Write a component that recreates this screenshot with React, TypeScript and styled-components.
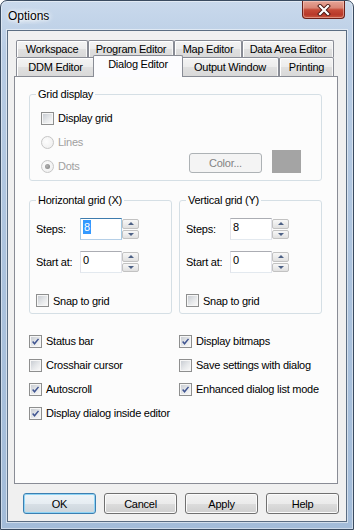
import React from "react";
import styled, { createGlobalStyle, css } from "styled-components";

const GlobalStyle = createGlobalStyle`
  html, body {
    margin: 0;
    padding: 0;
    background: #ffffff;
  }
  body {
    font-family: "Liberation Sans", Arial, sans-serif;
    font-size: 11px;
    letter-spacing: -0.25px;
    color: #000;
  }
  * {
    box-sizing: border-box;
  }
`;

const Window = styled.div`
  width: 354px;
  height: 530px;
  display: flex;
  flex-direction: column;
  border: 1px solid #3a4b60;
  border-radius: 7px 7px 0 0;
  padding: 0 6px 7px;
  background: linear-gradient(180deg, #c9d9ec 0%, #b8cce4 10%, #abc2dd 55%, #a3bcd9 100%);
  box-shadow: inset 0 0 0 1px rgba(255, 255, 255, 0.45);
  overflow: hidden;
`;

const TitleBar = styled.div`
  height: 29px;
  flex: none;
  display: flex;
  align-items: center;
  justify-content: space-between;
  padding: 0 2px 0 1px;
`;

const Title = styled.div`
  font-size: 12px;
  letter-spacing: 0;
  line-height: 15px;
  padding: 2px 6px 0 0;
  text-shadow: 0 0 6px #ffffff, 0 0 3px rgba(255, 255, 255, 0.9);
  background: radial-gradient(ellipse at 40% 55%, rgba(255, 255, 255, 0.5), rgba(255, 255, 255, 0) 70%);
`;

const CloseButton = styled.div`
  align-self: flex-start;
  width: 43px;
  height: 18px;
  display: flex;
  align-items: center;
  justify-content: center;
  border: 1px solid #6b2019;
  border-top: none;
  border-radius: 0 0 4px 4px;
  background: linear-gradient(180deg, #e6a597 0%, #d98676 40%, #c54a37 52%, #b8392a 80%, #c9583f 100%);
  box-shadow: inset 0 0 0 1px rgba(255, 220, 210, 0.45);
`;

const Client = styled.div`
  flex: 1;
  display: flex;
  flex-direction: column;
  background: #f0f0f0;
  border: 1px solid #5b6d82;
  box-shadow: 0 0 0 1px rgba(255, 255, 255, 0.5);
  padding: 9px 7px 7px 6px;
`;

const TabStrip = styled.div`
  display: flex;
  flex-direction: column;
  padding-left: 2px;
`;

const TabRow = styled.div<{ $front?: boolean }>`
  display: flex;
  align-items: flex-start;
  height: ${(p) => (p.$front ? 19 : 17)}px;
`;

const Tab = styled.div<{ $w: number; $active?: boolean }>`
  flex: none;
  width: ${(p) => p.$w}px;
  height: 100%;
  display: flex;
  align-items: center;
  justify-content: center;
  line-height: 13px;
  border: 1px solid #898c95;
  border-bottom: none;
  border-radius: 2px 2px 0 0;
  background: linear-gradient(180deg, #f4f4f4 0%, #ececec 50%, #e0e0e0 52%, #d9d9d9 100%);
  box-shadow: inset 1px 1px 0 #ffffff, inset -1px 0 0 #f7f7f7;
  white-space: nowrap;
  ${(p) =>
    p.$active &&
    css`
      width: ${p.$w + 4}px;
      height: 22px;
      margin: -2px -2px 0;
      padding-bottom: 4px;
      background: #fcfcfe;
      box-shadow: none;
      position: relative;
      z-index: 1;
    `}
`;

const Panel = styled.div`
  width: 324px;
  height: 408px;
  flex: none;
  display: flex;
  flex-direction: column;
  border: 1px solid #898c95;
  background: #fcfcfc;
  padding: 11px 15px 0 14px;
`;

const Group = styled.fieldset`
  margin: 0;
  padding: 0;
  min-width: 0;
  border: 1px solid #d5dfe5;
  border-radius: 3px;
`;

const Legend = styled.legend`
  margin-left: 6px;
  padding: 0 2px;
  line-height: 13px;
  font-size: 11px;
`;

const GridBody = styled.div`
  padding: 5px 20px 2px 11px;
  display: flex;
  flex-direction: column;
`;

const Line = styled.div`
  height: 24px;
  display: flex;
  align-items: center;
`;

const RadioBlock = styled.div`
  display: flex;
  align-items: flex-end;
`;

const RadioColumn = styled.div`
  display: flex;
  flex-direction: column;
`;

const ColorArea = styled.div`
  margin-left: auto;
  padding-bottom: 5px;
  display: flex;
  align-items: flex-end;
  gap: 10px;
`;

const ColorButton = styled.div`
  width: 73px;
  height: 20px;
  display: flex;
  align-items: center;
  justify-content: center;
  border: 1px solid #adb2b5;
  border-radius: 3px;
  background: #f4f4f4;
  color: #838383;
`;

const Swatch = styled.div`
  width: 29px;
  height: 23px;
  background: #a4a4a4;
`;

const GroupPair = styled.div`
  margin-top: 13px;
  display: grid;
  grid-template-columns: 143px 143px;
  column-gap: 7px;
`;

const AxisBody = styled.div`
  padding: 11px 6px 6px;
  display: flex;
  flex-direction: column;
`;

const SpinRow = styled.div`
  height: 22px;
  display: flex;
  align-items: center;
  & + & {
    margin-top: 11px;
  }
`;

const SpinLabel = styled.span`
  width: 44px;
  flex: none;
`;

const Edit = styled.div<{ $focused?: boolean }>`
  width: 42px;
  height: 22px;
  border: 1px solid;
  border-color: #abadb3 #e2e3ea #e3e9ef #e2e3ea;
  background: #ffffff;
  padding: 1px 0 0 2px;
  line-height: 14px;
  ${(p) =>
    p.$focused &&
    css`
      border-color: #3d7bad #a4c9e3 #b5cfe7 #a4c9e3;
    `}
`;

const Selection = styled.span`
  display: inline-block;
  padding: 0 1px;
  background: #3399ff;
  color: #ffffff;
`;

const Spin = styled.div`
  width: 17px;
  height: 22px;
  flex: none;
  display: flex;
  flex-direction: column;
  gap: 1px;
  padding: 1px 0;
`;

const SpinButton = styled.div<{ $down?: boolean }>`
  flex: 1;
  display: flex;
  align-items: center;
  justify-content: center;
  border: 1px solid #c2c2c2;
  border-radius: 2px;
  background: linear-gradient(180deg, #f7f7f7 0%, #ececec 50%, #e0e0e0 100%);
  &::after {
    content: "";
    border-left: 3.5px solid transparent;
    border-right: 3.5px solid transparent;
    ${(p) =>
      p.$down
        ? css`
            border-top: 3px solid #4d6185;
          `
        : css`
            border-bottom: 3px solid #4d6185;
          `}
  }
`;

const SnapRow = styled.div`
  margin-top: 21px;
  display: flex;
`;

const Options = styled.div`
  margin-top: 15px;
  display: grid;
  grid-template-columns: 150px 1fr;
  grid-auto-rows: 24px;
  align-items: center;
`;

const CheckRow = styled.label<{ $disabled?: boolean }>`
  display: flex;
  align-items: center;
  gap: 4px;
  white-space: nowrap;
  color: ${(p) => (p.$disabled ? "#a0a0a0" : "#000")};
`;

const Box = styled.span`
  flex: none;
  width: 13px;
  height: 13px;
  display: flex;
  align-items: center;
  justify-content: center;
  border: 1px solid #8e8f8f;
  padding: 1px;
  background: linear-gradient(135deg, #c9cdd3 0%, #e6e8ea 55%, #f8f8f8 100%) content-box, #f6f6f6;
`;

const Radio = styled.span<{ $checked?: boolean }>`
  flex: none;
  width: 13px;
  height: 13px;
  display: flex;
  align-items: center;
  justify-content: center;
  border: 1px solid #c6c6c6;
  border-radius: 50%;
  background: radial-gradient(circle at 40% 40%, #fdfdfd 0%, #ececec 100%);
  &::after {
    content: "";
    width: 5px;
    height: 5px;
    border-radius: 50%;
    background: ${(p) => (p.$checked ? "radial-gradient(circle at 40% 40%, #b4b4b4, #7d7d7d)" : "transparent")};
  }
`;

const ButtonBar = styled.div`
  margin-top: 9px;
  padding-left: 9px;
  display: flex;
  gap: 8px;
`;

const Button = styled.button<{ $default?: boolean }>`
  width: 73px;
  height: 21px;
  padding: 0;
  font: 11px "Liberation Sans", Arial, sans-serif;
  letter-spacing: -0.25px;
  color: #000;
  border: 1px solid #707070;
  border-radius: 3px;
  background: linear-gradient(180deg, #f2f2f2 0%, #ebebeb 50%, #dddddd 51%, #cfcfcf 100%);
  box-shadow: inset 0 0 0 1px #fbfbfb;
  ${(p) =>
    p.$default &&
    css`
      border-color: #3c7fb1;
      box-shadow: inset 0 0 0 1px #8fd4f5;
      background: linear-gradient(180deg, #eef4f8 0%, #e6edf2 50%, #d8e0e6 51%, #ccd5dc 100%);
    `}
`;

function CloseGlyph() {
  return (
    <svg width="14" height="12" viewBox="0 0 14 12">
      <path d="M3 2 L11 10 M11 2 L3 10" stroke="#4a1712" strokeWidth="4" strokeLinecap="square" />
      <path d="M3 2 L11 10 M11 2 L3 10" stroke="#ffffff" strokeWidth="2.2" strokeLinecap="square" />
    </svg>
  );
}

function Check({ checked, label }: { checked?: boolean; label: string }) {
  return (
    <CheckRow>
      <Box>
        {checked && (
          <svg width="11" height="11" viewBox="0 0 11 11">
            <path d="M2 5.6 L4.3 8.3 L9.2 2.3" fill="none" stroke="#3f5491" strokeWidth="1.8" />
          </svg>
        )}
      </Box>
      {label}
    </CheckRow>
  );
}

function SpinField({ label, value, focused }: { label: string; value: string; focused?: boolean }) {
  return (
    <SpinRow>
      <SpinLabel>{label}</SpinLabel>
      <Edit $focused={focused}>{focused ? <Selection>{value}</Selection> : value}</Edit>
      <Spin>
        <SpinButton />
        <SpinButton $down />
      </Spin>
    </SpinRow>
  );
}

function AxisGroup({ title, focused }: { title: string; focused?: boolean }) {
  return (
    <Group>
      <Legend>{title}</Legend>
      <AxisBody>
        <SpinField label="Steps:" value="8" focused={focused} />
        <SpinField label="Start at:" value="0" />
        <SnapRow>
          <Check label="Snap to grid" />
        </SnapRow>
      </AxisBody>
    </Group>
  );
}

const backTabs = [
  { label: "Workspace", w: 72 },
  { label: "Program Editor", w: 86 },
  { label: "Map Editor", w: 68 },
  { label: "Data Area Editor", w: 92 },
];

const frontTabs = [
  { label: "DDM Editor", w: 79 },
  { label: "Dialog Editor", w: 86, active: true },
  { label: "Output Window", w: 98 },
  { label: "Printing", w: 55 },
];

export default function App() {
  return (
    <>
      <GlobalStyle />
      <Window>
        <TitleBar>
          <Title>Options</Title>
          <CloseButton>
            <CloseGlyph />
          </CloseButton>
        </TitleBar>
        <Client>
          <TabStrip>
            <TabRow>
              {backTabs.map((t) => (
                <Tab key={t.label} $w={t.w}>
                  {t.label}
                </Tab>
              ))}
            </TabRow>
            <TabRow $front>
              {frontTabs.map((t) => (
                <Tab key={t.label} $w={t.w} $active={t.active}>
                  {t.label}
                </Tab>
              ))}
            </TabRow>
          </TabStrip>
          <Panel>
            <Group>
              <Legend>Grid display</Legend>
              <GridBody>
                <Line>
                  <Check label="Display grid" />
                </Line>
                <RadioBlock>
                  <RadioColumn>
                    <Line>
                      <CheckRow $disabled>
                        <Radio />
                        Lines
                      </CheckRow>
                    </Line>
                    <Line>
                      <CheckRow $disabled>
                        <Radio $checked />
                        Dots
                      </CheckRow>
                    </Line>
                  </RadioColumn>
                  <ColorArea>
                    <ColorButton>Color...</ColorButton>
                    <Swatch />
                  </ColorArea>
                </RadioBlock>
              </GridBody>
            </Group>
            <GroupPair>
              <AxisGroup title="Horizontal grid (X)" focused />
              <AxisGroup title="Vertical grid (Y)" />
            </GroupPair>
            <Options>
              <Check checked label="Status bar" />
              <Check checked label="Display bitmaps" />
              <Check label="Crosshair cursor" />
              <Check label="Save settings with dialog" />
              <Check checked label="Autoscroll" />
              <Check checked label="Enhanced dialog list mode" />
              <Check checked label="Display dialog inside editor" />
            </Options>
          </Panel>
          <ButtonBar>
            <Button $default>OK</Button>
            <Button>Cancel</Button>
            <Button>Apply</Button>
            <Button>Help</Button>
          </ButtonBar>
        </Client>
      </Window>
    </>
  );
}
